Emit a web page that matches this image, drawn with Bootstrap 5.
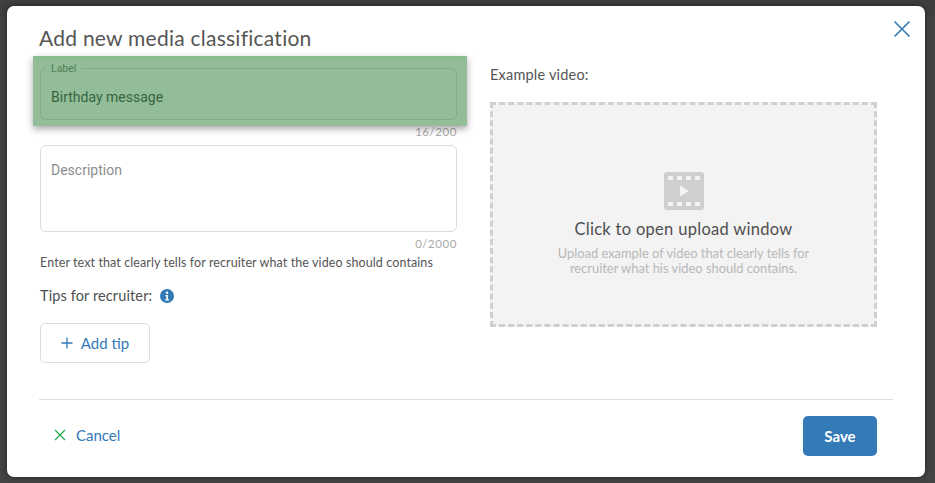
<!DOCTYPE html>
<html lang="en">
<head>
<meta charset="utf-8">
<title>Add new media classification</title>
<link href="https://cdn.jsdelivr.net/npm/bootstrap@5.3.0/dist/css/bootstrap.min.css" rel="stylesheet">
<style>
html,body{height:100%;overflow:hidden}
body{background:linear-gradient(#3f3f3f 16px,#444 16px);font-family:"Lato","Liberation Sans",sans-serif;color:#4a4a4a}
.stage{height:483px;padding:6px 10px 6px 7px}
.dialog-box{height:471px;background:#fff;border-radius:7px;padding:0 32px;box-shadow:0 0 6px rgba(0,0,0,.5)}
.dialog-title{font-size:21px;font-weight:400;line-height:26px;margin:0;color:#555;letter-spacing:.25px}
.closer{top:14px;right:14px;width:18px;height:18px;background:none;border:0;padding:0}
.closer svg{display:block}
.form-side{width:417px;margin-left:1px}
.video-side{width:387px;margin-left:33px}
.outlined{border:1px solid #dcdcdc;border-radius:6px;padding:0 10px}
.first-field{height:52px;margin-top:17px;padding-top:18px;font:14px/20px Roboto,sans-serif;color:#3f3f3f;letter-spacing:0}
.float-label{top:-7px;left:5px;padding:0 5px;background:#fff;font:10.5px/13px Roboto,sans-serif;color:#777}
.highlight{left:-7px;top:-12px;width:434px;height:70px;background:rgba(50,130,60,.53);border-top:3px solid rgba(120,190,130,.35);box-shadow:0 3px 7px rgba(0,0,0,.35)}
.counter{font-size:11.5px;line-height:14px;color:#a9a9a9;text-align:right;letter-spacing:.55px}
.counter-a{margin-top:5px}
.counter-b{margin-top:5px}
.second-field{height:87px;margin-top:6px;padding-top:14px;font:14px/20px Roboto,sans-serif;color:#8d8d8d;letter-spacing:0}
.hint-line{font-size:12.5px;line-height:16px;margin-top:4px;color:#555;letter-spacing:.1px}
.tips-line{font-size:14.5px;line-height:18px;margin-top:16px;color:#4f4f4f;letter-spacing:.12px}
.add-tip{width:110px;height:40px;margin-top:18px;border:1px solid #dcdcdc;border-radius:5px;background:#fff;color:#337ab7;font-size:15px;padding:0;letter-spacing:0}
.section-label{font-size:14.5px;line-height:18px;margin-top:15px;color:#555;letter-spacing:.2px}
.drop-area{height:225px;margin-top:18px;border:3px dashed #d0d0d0;background:#f3f3f3;padding-top:67px}
.drop-title{font-size:16.5px;line-height:20px;margin-top:9px;color:#4f4f4f;letter-spacing:.3px}
.drop-text{font-size:12.9px;line-height:15px;margin-top:7px;color:#b8b8b8;width:280px}
.sep{height:1px;background:#e0e0e0;width:854px}
.body-area{height:393px;padding-top:19px}
.foot-area{height:77px;padding:16px 16px 0 15px}
.cancel-link{color:#337ab7;font-size:15px;text-decoration:none;margin-top:8px;gap:10px}
.save-btn{width:74px;height:40px;background:#337ab7;border:0;border-radius:5px;color:#fff;font-size:15px;font-weight:700;padding:0}
</style>
</head>
<body>
<div class="stage">
<div class="dialog-box position-relative">
  <button class="closer position-absolute" aria-label="Close"><svg width="18" height="18" viewBox="0 0 18 18"><path d="M1.500 1.500 16.500 16.500M16.500 1.500 1.500 16.500" stroke="#337ab7" stroke-width="1.6" fill="none"/></svg></button>
  <div class="body-area">
    <h1 class="dialog-title">Add new media classification</h1>
    <div class="d-flex">
      <div class="form-side">
        <div class="position-relative">
          <div class="outlined first-field position-relative">Birthday message<span class="float-label position-absolute">Label</span></div>
          <div class="highlight position-absolute"></div>
        </div>
        <div class="counter counter-a">16/200</div>
        <div class="outlined second-field">Description</div>
        <div class="counter counter-b">0/2000</div>
        <div class="hint-line">Enter text that clearly tells for recruiter what the video should contains</div>
        <div class="tips-line d-flex align-items-center gap-1">Tips for recruiter:
          <svg class="ms-1" width="14" height="14" viewBox="0 0 14 14"><circle cx="7" cy="7" r="7" fill="#337ab7"/><circle cx="7" cy="3.7" r="1.2" fill="#fff"/><path d="M5.4 6h2.500v4.200H9v1.200H5.200v-1.200h1.100V7.200H5.400z" fill="#fff"/></svg>
        </div>
        <button class="add-tip d-flex align-items-center justify-content-center gap-2"><svg width="12" height="12" viewBox="0 0 12 12"><path d="M6 .5v11M.5 6h11" stroke="#337ab7" stroke-width="1.300"/></svg>Add tip</button>
      </div>
      <div class="video-side">
        <div class="section-label">Example video:</div>
        <div class="drop-area d-flex flex-column align-items-center text-center">
          <svg width="40" height="38" viewBox="0 0 40 38"><rect width="40" height="38" rx="3" fill="#cfcfcf"/><g fill="#f3f3f3"><rect x="4" y="4" width="5" height="4"/><rect x="13" y="4" width="5" height="4"/><rect x="22" y="4" width="5" height="4"/><rect x="31" y="4" width="5" height="4"/><rect x="4" y="30" width="5" height="4"/><rect x="13" y="30" width="5" height="4"/><rect x="22" y="30" width="5" height="4"/><rect x="31" y="30" width="5" height="4"/><path d="M16 13.500 25 19l-9 5.500z"/></g></svg>
          <div class="drop-title">Click to open upload window</div>
          <div class="drop-text">Upload example of video that clearly tells for recruiter what his video should contains.</div>
        </div>
      </div>
    </div>
  </div>
  <div class="sep"></div>
  <div class="foot-area d-flex justify-content-between align-items-start">
    <a class="cancel-link d-flex align-items-center" href="#"><svg width="12" height="12" viewBox="0 0 12 12"><path d="M1 1 11 11M11 1 1 11" stroke="#22a84a" stroke-width="1.200"/></svg>Cancel</a>
    <button class="save-btn">Save</button>
  </div>
</div>
</div>
<script src="https://cdn.jsdelivr.net/npm/bootstrap@5.3.0/dist/js/bootstrap.bundle.min.js"></script>
</body>
</html>
